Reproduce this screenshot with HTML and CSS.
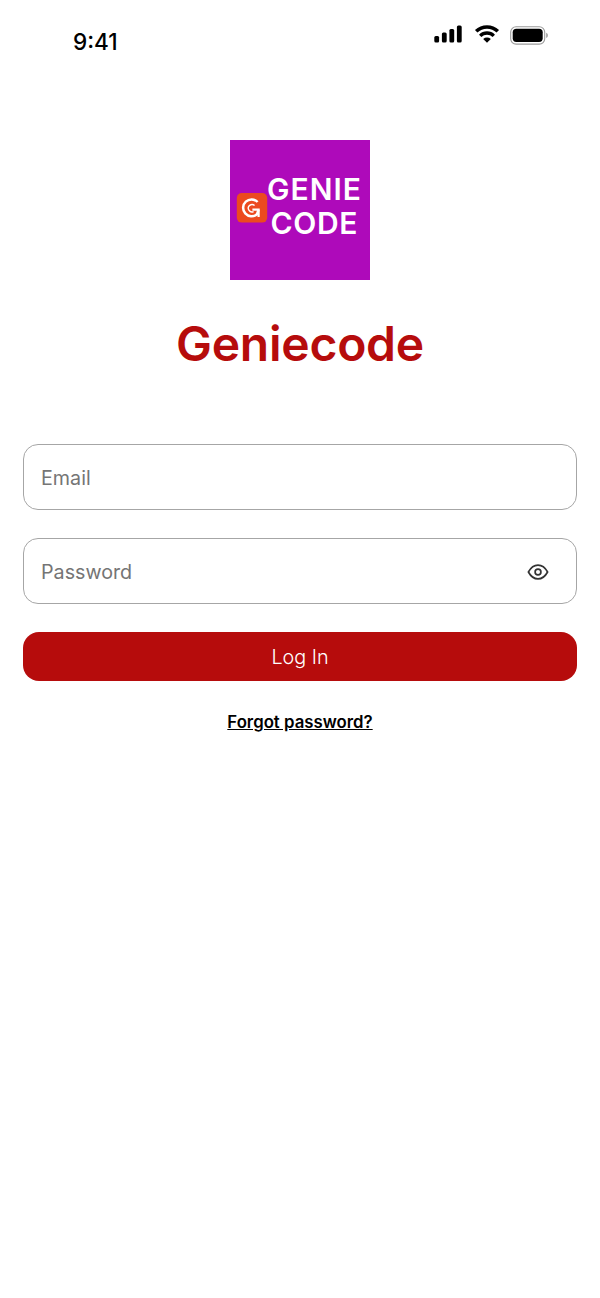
FILE: index.html
```html
<!doctype html>
<html lang="en">
<head>
<title>Geniecode</title>
<meta charset="utf-8">
<meta name="viewport" content="width=device-width, initial-scale=1.0">

<link rel="stylesheet" href="styles.css">

</head>
<body>

<!-- Status bar -->
<header class="statusbar">
    <span class="time">9:41</span>
    <div class="indicators">
        <svg class="signal" width="28" height="18" viewBox="0 0 28 18">
            <rect x="0.3" y="11" width="4.8" height="6.6" rx="1.5"/>
            <rect x="7.9" y="7.4" width="4.8" height="10.2" rx="1.5"/>
            <rect x="15.4" y="4" width="4.8" height="13.6" rx="1.5"/>
            <rect x="22.9" y="0.4" width="4.8" height="17.2" rx="1.5"/>
        </svg>
        <svg class="wifi" width="26" height="18" viewBox="0 0 26 18">
            <path d="M2.2 6.3A15.4 15.4 0 0 1 23.8 6.3" fill="none" stroke="#000" stroke-width="3.5"/>
            <path d="M6.2 10.8A9.6 9.6 0 0 1 19.8 10.8" fill="none" stroke="#000" stroke-width="3.3"/>
            <path d="M9.2 14A5.6 5.6 0 0 1 16.8 14L13 17.8Z"/>
        </svg>
        <svg class="battery" width="39" height="19" viewBox="0 0 39 19">
            <rect x="0.7" y="0.7" width="34" height="17.4" rx="5.4" fill="none" stroke="#9b9b9b" stroke-width="1.1"/>
            <rect x="2.7" y="2.7" width="30" height="13.2" rx="3.6"/>
            <path d="M36.2 6.8C38.4 7.7 38.4 11.1 36.2 12Z" fill="#9b9b9b"/>
        </svg>
    </div>
</header>

<!-- Login -->
<main class="login">
    <svg class="logo" width="140" height="140" viewBox="0 0 140 140">
        <rect width="140" height="140" fill="#ae0aba"/>
        <rect x="6.8" y="53" width="30.4" height="29.6" rx="5" fill="#ec4a1f"/>
        <path d="M27.6 62A8.4 8.4 0 1 0 27 74.2L28.6 69.6" fill="none" stroke="#fff" stroke-width="2.5"/>
        <path d="M22.4 69.6H28.6V77" fill="none" stroke="#fff" stroke-width="2.2"/>
        <path d="M24.6 65.6A3.7 3.7 0 1 0 23.6 71.6" fill="none" stroke="#fff" stroke-width="1.4"/>
        <g class="wordmark">
            <text x="37" y="60.3" textLength="94" lengthAdjust="spacing">GENIE</text>
            <text x="40.4" y="94" textLength="87" lengthAdjust="spacing">CODE</text>
        </g>
    </svg>

    <h1>Geniecode</h1>

    <form class="form">
        <div class="field">
            <input type="text" placeholder="Email">
        </div>
        <div class="field">
            <input type="password" placeholder="Password">
            <svg class="eye" width="22" height="16" viewBox="0 0 22 16" fill="none" stroke="#333" stroke-width="1.7">
                <path d="M1.4 8C3.8 3.6 6.9 1.1 11 1.1S18.2 3.6 20.6 8C18.2 12.4 15.1 14.9 11 14.9S3.8 12.4 1.4 8Z" stroke-linejoin="round"/>
                <circle cx="11" cy="8" r="2.9"/>
            </svg>
        </div>
        <button type="button" class="button">Log In</button>
    </form>

    <a class="forgot" href="#">Forgot password?</a>
</main>

</body>
</html>
```
FILE: styles.css
```css
* {
    margin: 0;
    padding: 0;
    box-sizing: border-box;
}
body {
    min-height: 1298px;
    background: #fff;
    color: #000;
    font-family: Inter, "Liberation Sans", sans-serif;
}

/* status bar */
.statusbar {
    display: flex;
    justify-content: space-between;
    height: 140px;
    padding: 25px 51px 0 73px;
}
.time {
    padding-top: 3px;
    font-size: 22.6px;
    font-weight: 500;
    line-height: 27px;
}
.indicators {
    display: flex;
    align-items: flex-start;
}
.wifi {
    margin-left: 12px;
}
.battery {
    margin: 1px 0 0 10px;
}

/* login */
.login {
    display: flex;
    flex-direction: column;
    align-items: center;
    padding: 0 23px;
}
.logo {
    display: block;
}
.wordmark {
    fill: #fff;
    font-size: 30px;
    font-weight: 600;
}
h1 {
    margin-top: 35px;
    color: #b60c0c;
    font-size: 48px;
    font-weight: 600;
    letter-spacing: -0.25px;
    line-height: 58px;
}
.form {
    display: flex;
    flex-direction: column;
    gap: 28px;
    width: 100%;
    margin-top: 71px;
}
.field {
    display: flex;
    align-items: center;
    height: 66px;
    padding: 1px 27px 0 17px;
    border: 1px solid #a6a6a6;
    border-radius: 15px;
}
.field input {
    flex: 1;
    border: 0;
    outline: 0;
    background: none;
    font-family: inherit;
    font-size: 19.7px;
}
.field input::placeholder {
    color: #757575;
}
.button {
    height: 49px;
    border: 0;
    border-radius: 16px;
    background: #b60c0c;
    color: #fff;
    font-family: inherit;
    font-size: 19.8px;
    font-weight: 300;
    cursor: pointer;
}
.forgot {
    margin-top: 31px;
    color: #000;
    font-size: 16.8px;
    font-weight: 600;
    line-height: 20px;
}
```
